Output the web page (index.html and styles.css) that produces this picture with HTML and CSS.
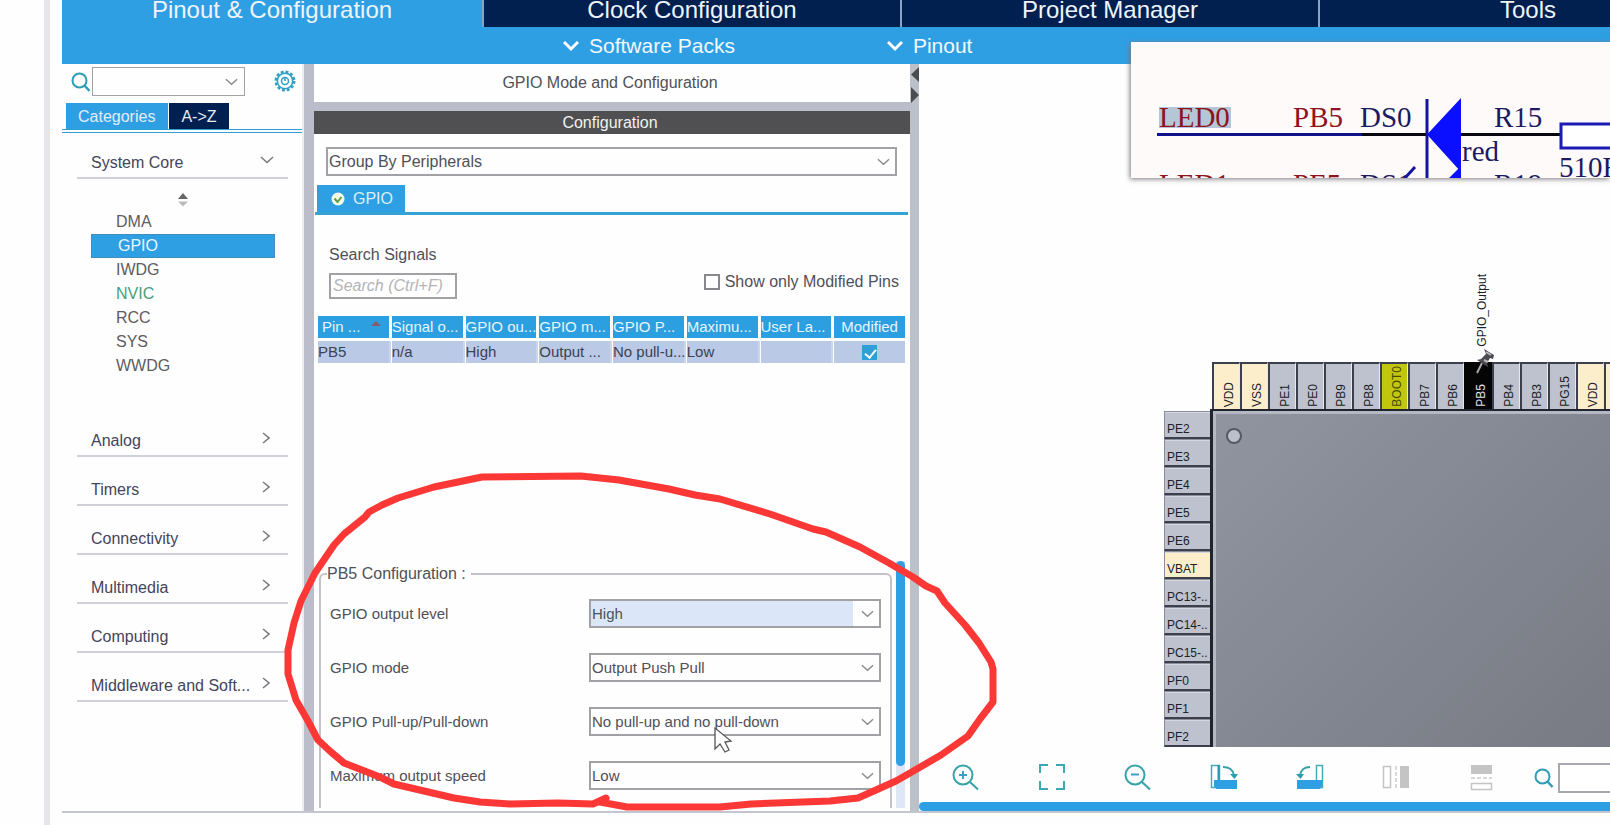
FILE: index.html
```html
<!DOCTYPE html>
<html lang="en">
<head>
<meta charset="utf-8">
<title>Pinout &amp; Configuration</title>
<link rel="stylesheet" href="styles.css">
</head>
<body>
<svg class="defs" aria-hidden="true">
  <symbol id="down" viewBox="0 0 14 8"><path d="M1 1l6 5.500 6-5.500" fill="none" stroke="currentColor" stroke-width="1.500"/></symbol>
  <symbol id="right" viewBox="0 0 8 12"><path d="M1 1l6 5-6 5" fill="none" stroke="currentColor" stroke-width="1.500"/></symbol>
  <symbol id="magnifier" viewBox="0 0 20 20"><circle cx="8.500" cy="8.500" r="7" fill="none" stroke="currentColor" stroke-width="2"/><path d="M13.500 13.500l5 5.500" stroke="currentColor" stroke-width="2.500"/></symbol>
</svg>
<div class="app">
  <nav class="tabs">
    <button class="tab active">Pinout &amp; Configuration</button>
    <button class="tab">Clock Configuration</button>
    <button class="tab">Project Manager</button>
    <button class="tab">Tools</button>
  </nav>
  <div class="menubar">
    <button class="menu"><svg viewBox="0 0 16 12"><path d="M1 2l7 7 7-7" fill="none" stroke="#fff" stroke-width="3"/></svg>Software Packs</button>
    <button class="menu"><svg viewBox="0 0 16 12"><path d="M1 2l7 7 7-7" fill="none" stroke="#fff" stroke-width="3"/></svg>Pinout</button>
  </div>

  <div class="workspace">
    <aside class="sidebar">
      <div class="finder">
        <svg class="mag"><use href="#magnifier"/></svg>
        <div class="combo small">
          <select aria-label="Search peripherals"><option></option></select>
          <svg class="chev"><use href="#down"/></svg>
        </div>
        <button class="gear" aria-label="Settings">
          <svg viewBox="0 0 22 22" fill="none" stroke="#2f9fc4"><circle cx="11" cy="11" r="9.300" stroke-width="2.400" stroke-dasharray="2.900 2"/><circle cx="11" cy="11" r="7.700" stroke-width="1.600"/><circle cx="11" cy="11" r="3.500" stroke-width="1.500"/><path d="M11 8v3" stroke-width="1.500"/></svg>
        </button>
      </div>
      <div class="views">
        <button class="view active">Categories</button>
        <button class="view">A-&gt;Z</button>
      </div>
      <div class="cats">
        <button class="cat first">System Core<svg class="chev-d"><use href="#down"/></svg></button>
        <div class="items">
          <svg class="sort" viewBox="0 0 12 14"><path d="M1 6l5-6 5 6z" fill="#666"/><path d="M1 8.500h10l-5 5z" fill="#bbb"/></svg>
          <button class="item">DMA</button>
          <button class="item selected">GPIO</button>
          <button class="item">IWDG</button>
          <button class="item enabled">NVIC</button>
          <button class="item">RCC</button>
          <button class="item">SYS</button>
          <button class="item">WWDG</button>
        </div>
        <button class="cat">Analog<svg class="chev-r"><use href="#right"/></svg></button>
        <button class="cat">Timers<svg class="chev-r"><use href="#right"/></svg></button>
        <button class="cat">Connectivity<svg class="chev-r"><use href="#right"/></svg></button>
        <button class="cat">Multimedia<svg class="chev-r"><use href="#right"/></svg></button>
        <button class="cat">Computing<svg class="chev-r"><use href="#right"/></svg></button>
        <button class="cat">Middleware and Soft...<svg class="chev-r"><use href="#right"/></svg></button>
      </div>
    </aside>
    <div class="splitter"></div>

    <main class="config">
      <div class="mode-title">GPIO Mode and Configuration</div>
      <div class="bar">Configuration</div>
      <div class="panel">
        <div class="combo group">
          <select aria-label="Grouping"><option>Group By Peripherals</option></select>
          <svg class="chev"><use href="#down"/></svg>
        </div>
        <div class="subtabs">
          <button class="subtab"><svg viewBox="0 0 14 14"><circle cx="7" cy="7" r="6.500" fill="#f6fbe8"/><path d="M3.500 6.500l3 3.500 4-5" fill="none" stroke="#5f9a4a" stroke-width="2"/></svg>GPIO</button>
        </div>
        <div class="filters">
          <div class="search">
            <label for="sig">Search Signals</label>
            <input id="sig" type="text" placeholder="Search (Ctrl+F)">
          </div>
          <label class="only"><input type="checkbox">Show only Modified Pins</label>
        </div>
        <div class="signals">
          <table>
            <thead><tr>
              <th class="sorted">Pin ... <svg viewBox="0 0 10 6"><path d="M0 5l5-5 5 5z" fill="#8a5a70"/></svg></th><th>Signal o...</th><th>GPIO ou...</th><th>GPIO m...</th><th>GPIO P...</th><th>Maximu...</th><th>User La...</th><th class="mid">Modified</th>
            </tr></thead>
            <tbody><tr>
              <td>PB5</td><td>n/a</td><td>High</td><td>Output ...</td><td>No pull-u...</td><td>Low</td><td></td><td class="mid"><input type="checkbox" checked aria-label="Modified"></td>
            </tr></tbody>
          </table>
        </div>
        <div class="scroller">
          <fieldset>
            <legend>PB5 Configuration :</legend>
            <div class="fields">
              <label for="f1">GPIO output level</label>
              <div class="combo focus"><select id="f1"><option>High</option></select><svg class="chev"><use href="#down"/></svg></div>
              <label for="f2">GPIO mode</label>
              <div class="combo"><select id="f2"><option>Output Push Pull</option></select><svg class="chev"><use href="#down"/></svg></div>
              <label for="f3">GPIO Pull-up/Pull-down</label>
              <div class="combo"><select id="f3"><option>No pull-up and no pull-down</option></select><svg class="chev"><use href="#down"/></svg></div>
              <label for="f4">Maximum output speed</label>
              <div class="combo"><select id="f4"><option>Low</option></select><svg class="chev"><use href="#down"/></svg></div>
            </div>
          </fieldset>
          <div class="track"><div class="thumb"></div></div>
        </div>
      </div>
    </main>
    <div class="splitter arrows">
      <svg viewBox="0 0 9 40"><path d="M9 3v15L1 10.500z M1 23v16l8-8z" fill="#4c4c50"/></svg>
    </div>

    <section class="pinout">
      <div class="canvas">
        <div class="signal"><span>GPIO_Output</span></div>
        <div class="top-pins">
          <div class="pin power">VDD</div><div class="pin power">VSS</div><div class="pin">PE1</div><div class="pin">PE0</div><div class="pin">PB9</div><div class="pin">PB8</div><div class="pin boot">BOOT0</div><div class="pin">PB7</div><div class="pin">PB6</div>
          <div class="pin used">PB5<svg viewBox="0 0 20 26"><path d="M2 25l5-10" stroke="#aaa" stroke-width="2"/><path d="M9 1l10 6-1 4-3-1-3 5 1 4-11-7 4-1 5-5z" fill="#4e4a52"/><path d="M11 4l5 3M9 12l4 2" stroke="#b8b4bc" stroke-width="2"/></svg></div>
          <div class="pin">PB4</div><div class="pin">PB3</div><div class="pin">PG15</div><div class="pin power">VDD</div><div class="pin power"></div>
        </div>
        <div class="left-pins">
          <div class="pin">PE2</div><div class="pin">PE3</div><div class="pin">PE4</div><div class="pin">PE5</div><div class="pin">PE6</div><div class="pin power">VBAT</div><div class="pin">PC13-..</div><div class="pin">PC14-..</div><div class="pin">PC15-..</div><div class="pin">PF0</div><div class="pin">PF1</div><div class="pin">PF2</div>
        </div>
        <div class="chip"><div class="dot"></div></div>
      </div>
      <div class="tools">
        <button aria-label="Zoom in"><svg viewBox="0 0 28 28" fill="none" stroke="#35a3a8" stroke-width="2"><circle cx="11" cy="12" r="9.500"/><path d="M18 19l8 7.500"/><path d="M7 12h8M11 8v8" stroke="#3aa0c8"/></svg></button>
        <button aria-label="Best fit"><svg viewBox="0 0 28 28" fill="none" stroke="#3aa9b4" stroke-width="2"><path d="M2 10V2h8M18 2h8v8M26 18v8h-8M10 26H2v-8"/></svg></button>
        <button aria-label="Zoom out"><svg viewBox="0 0 28 28" fill="none" stroke="#35a3a8" stroke-width="2"><circle cx="11" cy="12" r="9.500"/><path d="M18 19l8 7.500"/><path d="M7 11.500h8" stroke="#3aa0c8"/></svg></button>
        <button aria-label="Rotate right"><svg viewBox="0 0 28 28"><path d="M1.500 2.500h8v15l-5 7h-3z" fill="#fff" stroke="#43aab8" stroke-width="1.500"/><path d="M8.500 2v16" stroke="#2f96b4" stroke-width="2"/><path d="M4 17h23v9H6l-2-3z" fill="#2f9fe4"/><path d="M13 4c6 0 10 3 11 8" fill="none" stroke="#35a3a8" stroke-width="1.800"/><path d="M20 11h8l-3.500 5z" fill="#2a9cab"/></svg></button>
        <button aria-label="Rotate left"><svg viewBox="0 0 28 28"><path d="M26.500 2.500h-6v15l3 7h3z" fill="#fff" stroke="#43aab8" stroke-width="1.500"/><path d="M24 17H1v9h23l2-3v-6z" fill="#2f9fe4"/><path d="M14 4c-6 0-9 3-10 8" fill="none" stroke="#35a3a8" stroke-width="1.800"/><path d="M0 11h8l-3.500 5z" fill="#2a9cab"/></svg></button>
        <button aria-label="Flip horizontally" disabled><svg viewBox="0 0 28 28"><rect x="1.500" y="3.500" width="7" height="21" fill="#fff" stroke="#c4c4c4" stroke-width="1.500"/><path d="M14 3v22" stroke="#ccc" stroke-width="1.500" stroke-dasharray="4 2"/><rect x="18" y="3" width="9" height="22" fill="#c4c4c4"/></svg></button>
        <button aria-label="Flip vertically" disabled><svg viewBox="0 0 28 28"><rect x="3" y="2" width="21" height="9" fill="#c4c4c4"/><path d="M3 15h21" stroke="#ccc" stroke-width="1.500" stroke-dasharray="4 2"/><rect x="3.500" y="20.500" width="20" height="6" fill="#fff" stroke="#c4c4c4" stroke-width="1.500"/></svg></button>
        <svg class="mag"><use href="#magnifier"/></svg>
        <input type="text" aria-label="Find pin">
      </div>
      <div class="hscroll"></div>
    </section>
  </div>
</div>

<div class="schematic">
  <svg viewBox="0 0 479 136" width="479" height="136">
    <rect x="28" y="65" width="72" height="21" fill="#b5c6d6"/>
    <g font-family="Liberation Serif, serif" font-size="29">
      <g fill="#8c1420"><text x="28" y="85">LED0</text><text x="162" y="85">PB5</text><text x="28" y="152">LED1</text><text x="162" y="152">PE5</text></g>
      <g fill="#1c1a60"><text x="229" y="85">DS0</text><text x="363" y="85">R15</text><text x="331" y="119">red</text><text x="428" y="135">510R</text><text x="229" y="152">DS1</text><text x="363" y="152">R19</text></g>
    </g>
    <path d="M26 92.500h205" stroke="#10108c" stroke-width="3"/>
    <path d="M231 92.500h199" stroke="#080810" stroke-width="3"/>
    <path d="M296 57v79M274 136l10-11" stroke="#1414a0" stroke-width="3" fill="none"/>
    <path d="M296 92.500L330 56v74z M318 136l12-12v12z" fill="#0a10ff"/>
    <rect x="430" y="82" width="80" height="24" fill="#fff" stroke="#1a1ab4" stroke-width="3"/>
  </svg>
</div>

<svg class="overlay" viewBox="0 0 1610 825" width="1610" height="825" aria-hidden="true">
  <path d="M715 728v21l5-5 5 8 4-2-4-8 6-1z" fill="#fff" stroke="#555" stroke-width="1.300"/>
  <path d="M606 798L593 804 558 803 510 804 480 802 454 798 424 791 394 784 380 777 344 763 331 752 318 740 308 721 296 700 288 674 288 650 294 623 301 601 315 573 334 545 344 534 365 517 369 512 382 505 398 498 434 487 482 477 581 476 619 480 669 489 695 495 720 499 770 514 813 529 826 532 860 547 889 563 913 577 926 586 937 591 945 603 965 625 979 643 991 662 993 669 993 702 980 719 968 736 941 755 910 773 896 781 876 790 858 798 830 801 751 804 720 807 627 807 600 802z" fill="none" stroke="#fb3836" stroke-width="7" stroke-linejoin="round"/>
</svg>
</body>
</html>
```
FILE: styles.css
```css
* { box-sizing: border-box; }
html, body { height: 100%; }
body {
  margin: 0;
  background: #fefefe;
  color: #505058;
  font: 16px/20px "Liberation Sans", Arial, sans-serif;
  overflow: hidden;
  position: relative;
}
button, input, select { font: inherit; color: inherit; margin: 0; border-radius: 0; }
button { border: 0; padding: 0; background: none; text-align: left; }
.defs { position: absolute; width: 0; height: 0; }

.app {
  height: 100%;
  margin-left: 44px;
  border-left: 6px solid #e6e6e8;
  padding: 0 0 12px 12px;
  display: flex;
  flex-direction: column;
}

.tabs { display: flex; height: 27px; background: #2f9fe4; overflow: hidden; }
.tab {
  flex: 0 0 418px;
  height: 27px;
  padding: 1px 0 8px;
  line-height: 18px;
  background: #02204f;
  color: #eef4fb;
  font-size: 24px;
  text-align: center;
  border-left: 2px solid #8aa4c8;
}
.tab.active { flex-basis: 420px; background: #2f9fe4; border-left: 0; }

.menubar { display: flex; gap: 152px; height: 37px; padding: 1px 0 0 501px; background: #2f9fe4; }
.menu { display: flex; align-items: center; gap: 10px; color: #f2f9ff; font-size: 21px; line-height: 24px; white-space: nowrap; }
.menu svg { width: 16px; height: 12px; }

.workspace { flex: 1; min-height: 0; display: flex; border-bottom: 2px solid #c3c6d0; }
.splitter { flex: 0 0 10px; background: #bcbdcb; }
.splitter.arrows { flex-basis: 9px; background: #bcc0c8; }
.arrows svg { display: block; width: 9px; height: 40px; }

/* sidebar */
.sidebar { flex: 0 0 242px; min-width: 0; border-right: 2px solid #ececf2; }
.finder { display: flex; align-items: flex-start; padding: 3px 6px 0 9px; height: 39px; }
.mag { width: 20px; height: 20px; color: #2f9db4; margin-top: 5px; flex: none; }
.small { flex: none; width: 153px; margin-left: 1px; }
.gear { flex: none; margin: 3px 0 0 29px; width: 22px; height: 22px; }
.gear svg { display: block; width: 22px; height: 22px; }
.views { display: flex; gap: 1px; padding-left: 4px; border-bottom: 4px double #2f9fd4; }
.view { height: 26px; padding: 1px 12px 0; background: #02204f; color: #e4ecf6; }
.view.active { background: #2f9fe4; padding: 1px 13px 0 12px; }
.cats { padding: 0 14px 0 15px; }
.cat {
  display: flex;
  justify-content: space-between;
  align-items: flex-end;
  width: 100%;
  height: 49px;
  padding: 0 18px 4px 14px;
  border-bottom: 2px solid #cfd0d8;
  color: #44445a;
}
.cat.first { height: 46px; padding-right: 14px; }
.chev-d { width: 14px; height: 8px; margin-bottom: 9px; color: #77777f; }
.chev-r { width: 8px; height: 12px; margin-bottom: 7px; color: #77777f; }
.items { padding: 14px 13px 30px 14px; }
.sort { display: block; width: 12px; height: 14px; margin: 0 auto 3px; }
.item { display: block; width: 100%; height: 24px; padding-left: 25px; color: #5c5c60; }
.item.selected { background: #2f9fe4; color: #e8f5ff; padding-left: 27px; outline: 1px solid #3c8fbf; outline-offset: -1px; }
.item.enabled { color: #45a07c; }

/* combo boxes */
.combo { position: relative; height: 29px; }
.combo select {
  appearance: none;
  display: block;
  width: 100%;
  height: 100%;
  padding: 0 30px 0 1px;
  border: 2px solid #a2a2a6;
  background: #fefefe;
}
.combo select option { color: #505058; }
.combo .chev { position: absolute; right: 7px; top: 11px; width: 13px; height: 8px; color: #8a8a90; pointer-events: none; }
.combo.small select { border-width: 1px; }
.combo.focus select { background: linear-gradient(to left, #fefefe 26px, #dbe7f8 26px); }

/* configuration */
.config { flex: 0 0 596px; display: flex; flex-direction: column; min-height: 0; }
.mode-title { flex: none; height: 38px; line-height: 38px; text-align: center; padding-right: 4px; }
.bar { flex: none; border-top: 9px solid #bcbdcb; background: #505052; color: #f2f2f2; height: 32px; line-height: 23px; text-align: center; padding-right: 4px; }
.panel { flex: 1; min-height: 0; display: flex; flex-direction: column; padding: 13px 2px 3px 1px; }
.group { flex: none; margin: 0 11px 9px; }
.subtabs { flex: none; padding-left: 2px; border-bottom: 3px solid #35a3d4; }
.subtab { display: flex; align-items: center; gap: 8px; height: 27px; padding: 0 12px 0 14px; background: #2f9fe4; color: #d8efff; }
.subtab svg { width: 14px; height: 14px; }
.filters { flex: none; display: flex; justify-content: space-between; align-items: flex-end; padding: 30px 9px 14px 14px; }
.search { display: flex; flex-direction: column; gap: 8px; width: 128px; }
.search input { width: 100%; height: 26px; padding: 0 2px; border: 2px solid #a2a2a6; background: #fefefe; }
.search input::placeholder { color: #b4b4b8; font-style: italic; opacity: 1; }
.only { display: flex; align-items: center; gap: 5px; margin-bottom: 7px; white-space: nowrap; }
.only input { appearance: none; width: 16px; height: 16px; border: 2px solid #88888c; background: #fff; }

.signals { flex: 1; min-height: 0; }
table { width: 100%; table-layout: fixed; border-spacing: 3px; font-size: 15px; line-height: 20px; }
th { background: #2c9fe0; color: #e6f5ff; font-weight: 400; }
td { background: #b9c9e6; color: #3c4254; box-shadow: 2px 0 #c9d6ec; }
td:last-child { box-shadow: none; }
th, td { height: 22px; padding: 0; text-align: left; white-space: nowrap; }
th.sorted { padding-left: 4px; }
th.sorted svg { width: 10px; height: 6px; margin: 0 0 5px 6px; }
th.mid, td.mid { text-align: center; }
td input {
  appearance: none;
  display: block;
  width: 15px;
  height: 15px;
  margin: 0 auto;
  background: #2f9fd8;
  position: relative;
}
td input::after { content: ""; position: absolute; left: 5px; top: 2px; width: 5px; height: 9px; border: solid #fff; border-width: 0 2px 2px 0; transform: rotate(40deg); }

.scroller { flex: 0 0 247px; display: flex; gap: 4px; overflow: hidden; padding: 0 3px 0 4px; }
fieldset { flex: 1; height: 260px; margin: 3px 0 0; border: 2px solid #c4c2c8; border-radius: 6px; padding: 15px 9px 0 6px; min-width: 0; }
legend { padding: 0 5px 0 0; }
.fields { display: grid; grid-template-columns: 259px 1fr; row-gap: 25px; align-items: center; padding-left: 3px; font-size: 15px; }
.track { flex: 0 0 9px; background: #dfe7f6; }
.thumb { height: 83%; background: #2f9fe4; border-radius: 5px; }

/* pinout view */
.pinout { flex: 1; min-width: 0; display: flex; flex-direction: column; overflow: hidden; }
.canvas {
  flex: none;
  display: grid;
  grid-template-columns: 46px minmax(0, 1fr);
  padding: 209px 0 0 245px;
  color: #1c2028;
  font-size: 12px;
  line-height: 14px;
}
.signal { grid-column: 2; padding-left: 265px; height: 89px; }
.signal span { writing-mode: sideways-lr; white-space: nowrap; display: block; height: 74px; }
.top-pins { grid-column: 2; display: flex; padding-left: 2px; height: 47px; overflow: visible; }
.pin { background: #bec2cf; border: 2px solid #3c404c; }
.top-pins .pin {
  position: relative;
  flex: 0 0 28px;
  display: flex;
  align-items: center;
  border-width: 2px 1px 0 2px;
  border-right-color: #e8e8ec;
  writing-mode: sideways-lr;
  padding: 0 0 2px 5px;
}
.top-pins .pin.power, .left-pins .pin.power { background: #fdeecb; }
.top-pins .pin.boot { background: #c2c60c; color: #4a4a00; }
.top-pins .pin.used { background: #050505; color: #e0e0e0; border-color: #050505; }
.pin.used svg { position: absolute; left: 9px; top: -16px; width: 20px; height: 26px; }
.left-pins { padding-top: 2px; }
.left-pins .pin { height: 28px; border-width: 1px 0 2px 1px; padding: 10px 0 0 2px; border-top-color: #8a8e9a; border-left-color: #8a8e9a; white-space: nowrap; box-shadow: inset 0 1px #d4d6e0; }
.chip {
  border: solid #20242e;
  border-width: 2px 0 0 3px;
  box-shadow: inset 3px 3px #b4b8c2;
  background: linear-gradient(135deg, #9095a0, #858993 45%, #787b84);
  padding: 17px 0 0 13px;
}
.dot { width: 16px; height: 16px; border-radius: 50%; border: 2px solid #555963; background: #bcc0ca; }

.tools { flex: 1; display: flex; align-items: flex-start; gap: 58px; padding: 16px 0 0 33px; }
.tools button { flex: none; width: 28px; height: 28px; }
.tools button svg { display: block; width: 28px; height: 28px; }
.tools .mag { margin: 5px 0 0 -20px; }
.tools input { flex: 1; min-width: 0; height: 30px; margin-left: -54px; border: 2px solid #a8a8ae; border-right: 0; background: #fff; }
.hscroll { flex: none; height: 9px; background: #2f9fe4; border-radius: 5px 0 0 5px; }

.schematic {
  position: absolute;
  left: 1131px;
  top: 42px;
  right: 0;
  height: 136px;
  overflow: hidden;
  background: #fefafa;
  box-shadow: -1px 1px 5px #77777f;
}
.schematic svg { display: block; }
.overlay { position: absolute; left: 0; top: 0; pointer-events: none; }
```
